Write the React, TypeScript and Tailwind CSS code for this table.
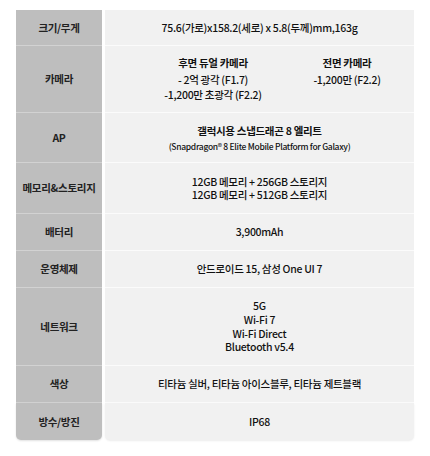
const font = { fontFamily: '"Noto Sans CJK KR", "Noto Sans", sans-serif' };

type Row = { label: string; h: string; value: React.ReactNode };

const rows: Row[] = [
  { label: '크기/무게', h: 'h-[36px]', value: <p>75.6(가로)x158.2(세로) x 5.8(두께)mm,163g</p> },
  {
    label: '카메라',
    h: 'h-[67px]',
    value: (
      <div className="flex w-full">
        <div className="w-[160px] ml-[28px] flex flex-col items-center leading-[15.5px]">
          <p className="font-bold mb-[1px]">후면 듀얼 카메라</p>
          <p>- 2억 광각 (F1.7)</p>
          <p>-1,200만 초광각 (F2.2)</p>
        </div>
        <div className="w-[100px] ml-[4px] flex flex-col items-center leading-[15.5px] self-start">
          <p className="font-bold mb-[1px]">전면 카메라</p>
          <p>-1,200만 (F2.2)</p>
        </div>
      </div>
    ),
  },
  {
    label: 'AP',
    h: 'h-[50px]',
    value: (
      <div className="flex flex-col items-center">
        <p className="font-bold leading-[16px]">갤럭시용 스냅드래곤 8 엘리트</p>
        <p className="text-[8.5px] leading-[14px]">(Snapdragon® 8 Elite Mobile Platform for Galaxy)</p>
      </div>
    ),
  },
  {
    label: '메모리&스토리지',
    h: 'h-[51px]',
    value: (
      <div className="flex flex-col items-center leading-[13.5px]">
        <p>12GB 메모리 + 256GB 스토리지</p>
        <p>12GB 메모리 + 512GB 스토리지</p>
      </div>
    ),
  },
  { label: '배터리', h: 'h-[37px]', value: <p>3,900mAh</p> },
  { label: '운영체제', h: 'h-[37px]', value: <p>안드로이드 15, 삼성 One UI 7</p> },
  {
    label: '네트워크',
    h: 'h-[78px]',
    value: (
      <div className="flex flex-col items-center leading-[13.7px]">
        <p>5G</p>
        <p>Wi-Fi 7</p>
        <p>Wi-Fi Direct</p>
        <p>Bluetooth v5.4</p>
      </div>
    ),
  },
  { label: '색상', h: 'h-[37px]', value: <p>티타늄 실버, 티타늄 아이스블루, 티타늄 제트블랙</p> },
  { label: '방수/방진', h: 'h-[37px]', value: <p>IP68</p> },
];

export default function App() {
  return (
    <div className="w-[430px] h-[456px] bg-white pt-[10px] pl-[16px]" style={font}>
      <div className="grid grid-cols-[86px_309px] gap-x-[3px] w-[398px] text-[10.5px] font-medium text-[#111] tracking-[-0.3px]">
        {rows.map((r, i) => {
          const last = i === rows.length - 1;
          return (
            <div key={r.label} className="contents">
              <div
                className={`${r.h} bg-[#bebebe] flex items-center justify-center font-bold text-[#222] ${
                  last ? 'rounded-b-[5px] shadow-[0_1px_2px_rgba(0,0,0,0.12)]' : 'border-b border-[#d2d2d2]'
                }`}
              >
                {r.label}
              </div>
              <div
                className={`${r.h} bg-[#f1f1f1] flex items-center justify-center text-center ${
                  last ? 'rounded-b-[5px] shadow-[0_1px_2px_rgba(0,0,0,0.08)]' : 'border-b border-[#fbfbfb]'
                }`}
              >
                {r.value}
              </div>
            </div>
          );
        })}
      </div>
    </div>
  );
}
